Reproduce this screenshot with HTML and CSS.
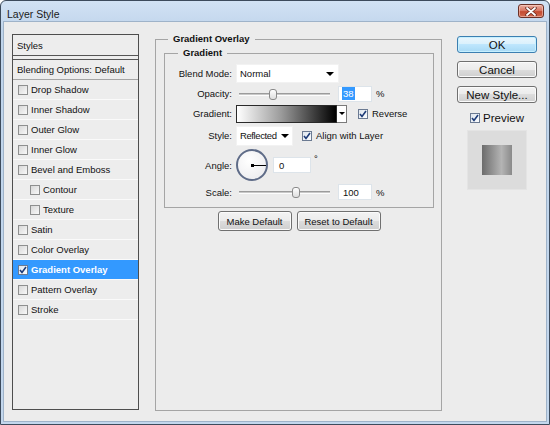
FILE: index.html
```html
<!DOCTYPE html>
<html lang="en">
<head>
    <meta charset="UTF-8">
    <title>Layer Style</title>
    <link rel="stylesheet" href="styles.css">
</head>
<body>
    <div class="window">
        <div class="titlebar">
            <span class="title">Layer Style</span>
            <span class="close">
                <svg width="12" height="9" viewBox="0 0 12 9">
                    <path d="M2 1 L10 8 M10 1 L2 8" stroke="#6b2a20" stroke-width="3.4" stroke-linecap="round"/>
                    <path d="M2 1 L10 8 M10 1 L2 8" stroke="#fff" stroke-width="1.8" stroke-linecap="round"/>
                </svg>
            </span>
        </div>
        <div class="client">
            <div class="style-list">
                <div class="item head">Styles</div>
                <div class="item blending">Blending Options: Default</div>
                <div class="item"><span class="cb"></span>Drop Shadow</div>
                <div class="item"><span class="cb"></span>Inner Shadow</div>
                <div class="item"><span class="cb"></span>Outer Glow</div>
                <div class="item"><span class="cb"></span>Inner Glow</div>
                <div class="item"><span class="cb"></span>Bevel and Emboss</div>
                <div class="item sub"><span class="cb"></span>Contour</div>
                <div class="item sub"><span class="cb"></span>Texture</div>
                <div class="item"><span class="cb"></span>Satin</div>
                <div class="item"><span class="cb"></span>Color Overlay</div>
                <div class="item selected">
                    <span class="cb checked"><svg width="8" height="8" viewBox="0 0 8 8"><path d="M1 4 L3 6.5 L7 1" fill="none" stroke="#1d3b78" stroke-width="1.6"/></svg></span>Gradient Overlay
                </div>
                <div class="item"><span class="cb"></span>Pattern Overlay</div>
                <div class="item"><span class="cb"></span>Stroke</div>
            </div>

            <fieldset class="group">
                <legend>Gradient Overlay</legend>
                <fieldset class="group inner">
                    <legend>Gradient</legend>
                    <div class="row r-blend">
                        <span class="label">Blend Mode:</span>
                        <span class="select wide">Normal<i class="arrow"></i></span>
                    </div>
                    <div class="row r-opacity">
                        <span class="label">Opacity:</span>
                        <span class="slider"><span class="thumb" style="left: 30px"></span></span>
                        <span class="num"><span class="hl">38</span></span>
                        <span class="unit">%</span>
                    </div>
                    <div class="row r-gradient">
                        <span class="label">Gradient:</span>
                        <span class="swatch"></span>
                        <span class="gdrop"><i class="arrow small"></i></span>
                        <span class="cb checked check-gap"><svg width="8" height="8" viewBox="0 0 8 8"><path d="M1 4 L3 6.5 L7 1" fill="none" stroke="#1d3b78" stroke-width="1.6"/></svg></span>
                        <span>Reverse</span>
                    </div>
                    <div class="row r-style">
                        <span class="label">Style:</span>
                        <span class="select narrow">Reflected<i class="arrow"></i></span>
                        <span class="cb checked align-gap"><svg width="8" height="8" viewBox="0 0 8 8"><path d="M1 4 L3 6.5 L7 1" fill="none" stroke="#1d3b78" stroke-width="1.6"/></svg></span>
                        <span>Align with Layer</span>
                    </div>
                    <div class="row r-angle">
                        <span class="label">Angle:</span>
                        <span class="dial"></span>
                        <span class="num angle">0</span>
                        <span class="degree">°</span>
                    </div>
                    <div class="row r-scale">
                        <span class="label">Scale:</span>
                        <span class="slider"><span class="thumb" style="left: 53px"></span></span>
                        <span class="num">100</span>
                        <span class="unit">%</span>
                    </div>
                </fieldset>
                <div class="defaults">
                    <span class="btn make">Make Default</span>
                    <span class="btn reset">Reset to Default</span>
                </div>
            </fieldset>

            <div class="actions">
                <span class="btn big ok">OK</span>
                <span class="btn big">Cancel</span>
                <span class="btn big">New Style...</span>
                <div class="preview-check">
                    <span class="cb checked"><svg width="8" height="8" viewBox="0 0 8 8"><path d="M1 4 L3 6.5 L7 1" fill="none" stroke="#1d3b78" stroke-width="1.6"/></svg></span>
                    <span>Preview</span>
                </div>
                <div class="preview-box"><div class="preview-swatch"></div></div>
            </div>
        </div>
    </div>
</body>
</html>
```

FILE: styles.css
```css
body {
    margin: 0;
    padding: 0;
    width: 550px;
    height: 425px;
    overflow: hidden;
    font-family: 'Liberation Sans', Arial, sans-serif;
    font-size: 9.5px;
    color: #111;
}
.window {
    box-sizing: border-box;
    width: 550px;
    height: 425px;
    border: 1px solid #3d4b5c;
    border-radius: 6px 6px 0 0;
    background: linear-gradient(#d2e2f4, #bfd4eb 30px, #c3d7ed);
    display: flex;
    flex-direction: column;
}
.titlebar {
    height: 21px;
    display: flex;
    justify-content: space-between;
    align-items: flex-start;
    padding-left: 6px;
}
.title {
    font-size: 10.5px;
    color: #1a1a1a;
    margin-top: 7px;
}
.close {
    box-sizing: border-box;
    width: 26px;
    height: 14px;
    margin-top: 3px;
    margin-right: 5px;
    border: 1px solid #6b3026;
    border-radius: 3px;
    background: linear-gradient(#eab0a3, #d8735f 50%, #c44a30 55%, #d0684f);
    box-shadow: inset 0 0 0 1px rgba(255, 220, 210, 0.5);
    display: flex;
    justify-content: center;
    align-items: center;
}
.client {
    flex: 1;
    margin: 0 3px 3px;
    background: #ececec;
    box-shadow: 0 0 0 1px #9fb3c9;
    display: flex;
    padding: 11px 9px 10px 8px;
}

/* style list */
.style-list {
    box-sizing: border-box;
    width: 127px;
    margin: 1px 0;
    border: 1px solid #4e4e4e;
    background: #ededed;
}
.item {
    height: 19px;
    border-bottom: 1px solid #fafafa;
    display: flex;
    align-items: center;
    padding-left: 5px;
    white-space: nowrap;
}
.item.head {
    height: 20px;
    padding-left: 4px;
    border-bottom: 1px solid #555;
    margin-bottom: 3px;
}
.item.blending {
    padding-left: 4px;
    border-top: 1px solid #555;
    border-bottom: 1px solid #a5a5a5;
}
.item.sub {
    padding-left: 17px;
}
.item.selected {
    background: #3399ff;
    color: #fff;
    font-weight: bold;
}
.cb {
    box-sizing: border-box;
    width: 10px;
    height: 10px;
    margin-right: 3px;
    border: 1px solid #8e8f8f;
    background: linear-gradient(135deg, #d8d8d8, #f8f8f8);
    display: inline-flex;
    justify-content: center;
    align-items: center;
    flex-shrink: 0;
}
.cb.checked {
    border-color: #6b7a92;
    background: linear-gradient(135deg, #dfe6ee, #fafcfe);
}

/* settings */
fieldset {
    margin: 0;
    min-width: 0;
}
.group {
    box-sizing: border-box;
    width: 287px;
    margin-left: 16px;
    border: 1px solid #a5a5a5;
    padding: 2px 7px 0 8px;
}
.group legend {
    font-weight: bold;
    line-height: 12px;
    padding: 0 5px;
    margin-left: 4px;
}
.group.inner {
    width: 270px;
    margin-left: 0;
    padding: 4px 0 6px 0;
}
.group.inner legend {
    margin-left: 13px;
}
.row {
    display: flex;
    align-items: center;
    white-space: nowrap;
}
.r-blend { height: 21px; }
.r-opacity { height: 19px; }
.r-gradient { height: 21px; }
.r-style { height: 23px; }
.r-angle { height: 36px; }
.r-scale { height: 18px; }
.label {
    width: 67px;
    margin-right: 4px;
    text-align: right;
}
.select {
    box-sizing: border-box;
    height: 19px;
    background: #fff;
    border: 1px solid #f2f2f2;
    padding: 0 4px 0 3px;
    display: flex;
    align-items: center;
    justify-content: space-between;
}
.select.wide { width: 103px; }
.select.narrow {
    width: 57px;
    height: 20px;
    padding-right: 3px;
    letter-spacing: -0.4px;
}
.arrow {
    width: 0;
    height: 0;
    border-left: 4px solid transparent;
    border-right: 4px solid transparent;
    border-top: 4px solid #000;
    flex-shrink: 0;
}
.select.narrow .arrow {
    margin-left: 3px;
}
.arrow.small {
    border-left-width: 3px;
    border-right-width: 3px;
    border-top-width: 3px;
}
.slider {
    position: relative;
    width: 91px;
    height: 14px;
    margin-left: 3px;
}
.slider::before {
    content: '';
    position: absolute;
    left: 0;
    right: 0;
    top: 6px;
    height: 1px;
    background: #c9c9c9;
    border-top: 1px solid #9c9c9c;
    border-bottom: 1px solid #fdfdfd;
}
.thumb {
    position: absolute;
    top: 2px;
    box-sizing: border-box;
    width: 8px;
    height: 11px;
    border: 1px solid #8a8a8a;
    border-radius: 3px;
    background: linear-gradient(#fdfdfd, #dedede);
}
.num {
    box-sizing: border-box;
    width: 34px;
    height: 16px;
    margin-left: 8px;
    padding-left: 4px;
    background: #fff;
    border: 1px solid #dde4ea;
    display: flex;
    align-items: center;
}
.num.angle {
    width: 38px;
    margin-left: 5px;
    padding-left: 5px;
}
.hl {
    background: #3399ff;
    color: #fff;
    padding: 1px 1px;
    margin-left: -1px;
}
.unit {
    margin-left: 4px;
}
.degree {
    margin-left: 3px;
    align-self: flex-start;
    margin-top: 6px;
    color: #000;
}
.swatch {
    box-sizing: border-box;
    width: 101px;
    height: 18px;
    border: 1px solid #2a2a2a;
    background: linear-gradient(to right, #fff, #9a9a9a 45%, #000);
}
.gdrop {
    box-sizing: border-box;
    width: 10px;
    height: 18px;
    border: 1px solid #7a7a7a;
    border-left: none;
    background: #fff;
    display: flex;
    justify-content: center;
    align-items: center;
}
.check-gap {
    margin-left: 11px;
    margin-right: 4px;
}
.align-gap {
    margin-left: 9px;
    margin-right: 4px;
}
.dial {
    position: relative;
    box-sizing: border-box;
    width: 32px;
    height: 32px;
    border: 2px solid #5f6c88;
    border-radius: 50%;
    background: radial-gradient(circle at 40% 35%, #fff, #e9e9ec);
}
.dial::before {
    content: '';
    position: absolute;
    left: 13px;
    top: 13px;
    width: 3px;
    height: 3px;
    background: #000;
}
.dial::after {
    content: '';
    position: absolute;
    left: 14px;
    top: 14px;
    width: 14px;
    height: 1px;
    background: #000;
}
.defaults {
    display: flex;
    justify-content: center;
    gap: 5px;
    margin-top: 3px;
}

/* buttons */
.btn {
    box-sizing: border-box;
    height: 20px;
    border: 1px solid #707070;
    border-radius: 3px;
    background: linear-gradient(#f3f3f3, #ebebeb 50%, #dddddd 50%, #cfcfcf);
    box-shadow: inset 0 0 0 1px #fbfbfb;
    display: flex;
    justify-content: center;
    align-items: center;
    white-space: nowrap;
}
.btn.make { width: 74px; }
.btn.reset { width: 84px; }
.btn.big {
    width: 80px;
    height: 17px;
    font-size: 11.5px;
}
.btn.big + .btn.big {
    margin-top: 8px;
}
.btn.ok {
    border-color: #3c7fb1;
    background: linear-gradient(#eaf6fd, #d9f0fc 50%, #bee6fd 50%, #a7d9f5);
    box-shadow: inset 0 0 0 1px #c6f0ff;
}

/* right column */
.actions {
    width: 80px;
    margin-left: 15px;
    margin-top: 3px;
    display: flex;
    flex-direction: column;
    align-items: center;
}
.preview-check {
    height: 20px;
    margin-top: 5px;
    display: flex;
    align-items: center;
    font-size: 11.5px;
}
.preview-box {
    box-sizing: border-box;
    width: 60px;
    height: 60px;
    margin-top: 2px;
    background: #dcdcdc;
    border: 1px solid #e4e4e4;
    display: flex;
    justify-content: center;
    align-items: center;
}
.preview-swatch {
    width: 30px;
    height: 30px;
    background: linear-gradient(to right, #6c6c6c, #b4b4b4 65%, #8a8a8a);
}
```
